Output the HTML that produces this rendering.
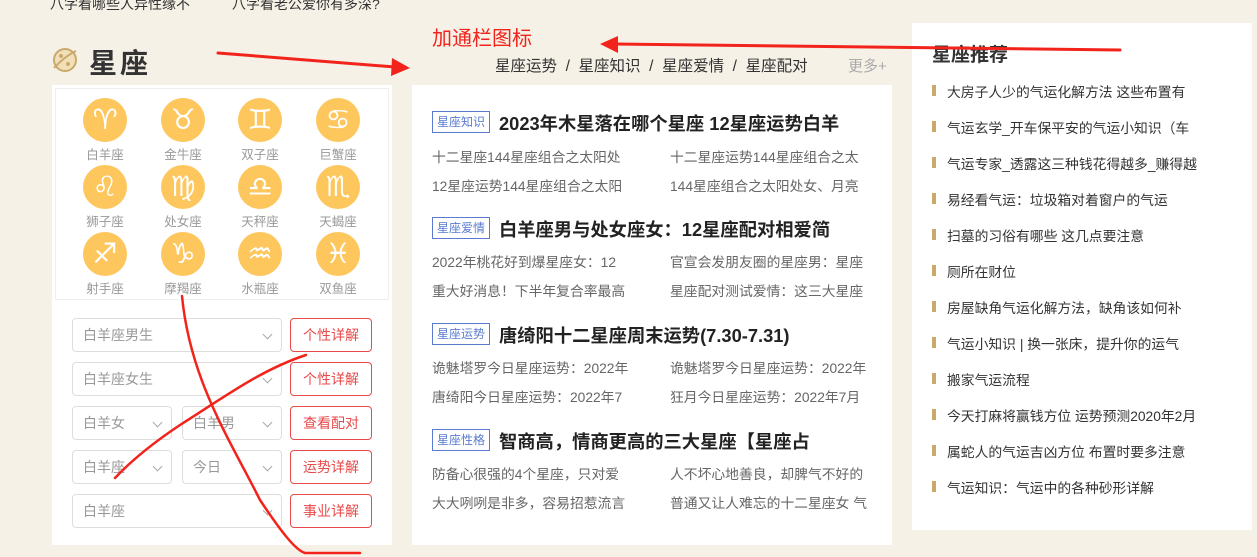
<!DOCTYPE html>
<html><head><meta charset="utf-8"><style>
*{margin:0;padding:0;box-sizing:border-box}
body{width:1257px;height:557px;overflow:hidden;background:#f6f1e7;font-family:"Liberation Sans","Noto Sans CJK SC",sans-serif;position:relative;color:#333}
.a{position:absolute;white-space:nowrap}
.panel{position:absolute;background:#fff}
.z{position:absolute;width:44px;height:44px;border-radius:50%;background:#fdc75e;color:#fff;font-family:"DejaVu Sans",sans-serif;font-size:28px;line-height:44px;text-align:center}
.zl{position:absolute;width:60px;text-align:center;font-size:12.5px;color:#999}
.sel{position:absolute;height:34px;border:1px solid #ddd;border-radius:4px;font-size:14px;color:#999;line-height:32px;padding-left:10px}
.sel:after{content:"";position:absolute;right:10px;top:12px;width:6px;height:6px;border-right:1px solid #aaa;border-bottom:1px solid #aaa;transform:rotate(45deg)}
.btn{position:absolute;left:290px;width:82px;height:34px;border:1px solid #e84a4a;border-radius:4px;color:#e84a4a;font-size:14px;line-height:32px;text-align:center}
.tag{position:absolute;left:432px;width:58px;height:22px;border:1px solid #5a7bd0;color:#5a7bd0;font-size:12px;line-height:20px;text-align:center}
.t{position:absolute;left:499px;font-size:18.3px;font-weight:bold;color:#222;white-space:nowrap}
.s{position:absolute;font-size:13.8px;color:#666;white-space:nowrap}
.r{position:absolute;left:932px;font-size:13.8px;color:#333;white-space:nowrap}
.r:before{content:"";position:absolute;left:0;top:4px;width:4px;height:11px;background:#c9a96c}
.r span{margin-left:15px}
</style></head><body>
<div class="a" style="left:50px;top:-6px;font-size:14px;color:#333">八字看哪些人异性缘不</div>
<div class="a" style="left:232px;top:-6px;font-size:14px;color:#333">八字看老公爱你有多深?</div>

<svg class="a" style="left:51px;top:46px" width="28" height="28" viewBox="0 0 28 28"><circle cx="14" cy="14" r="11" fill="#f1dfb8" stroke="#c9a96c" stroke-width="2"/><path d="M3 22 Q14 10 25 5" stroke="#c9a96c" stroke-width="2" fill="none"/><circle cx="10" cy="10" r="2" fill="#c9a96c"/><circle cx="17" cy="18" r="2" fill="#c9a96c"/></svg>
<div class="a" style="left:89px;top:42px;font-size:28px;font-weight:bold;color:#333;letter-spacing:3px">星座</div>

<div class="panel" style="left:52px;top:85px;width:340px;height:460px"></div>
<div class="a" style="left:55px;top:88px;width:334px;height:212px;border:1px solid #eee"></div>

<div class="z" style="left:83px;top:98px">♈&#xFE0E;</div><div class="zl" style="left:75px;top:144px">白羊座</div>
<div class="z" style="left:161px;top:98px">♉&#xFE0E;</div><div class="zl" style="left:153px;top:144px">金牛座</div>
<div class="z" style="left:238px;top:98px">♊&#xFE0E;</div><div class="zl" style="left:230px;top:144px">双子座</div>
<div class="z" style="left:316px;top:98px">♋&#xFE0E;</div><div class="zl" style="left:308px;top:144px">巨蟹座</div>
<div class="z" style="left:83px;top:165px">♌&#xFE0E;</div><div class="zl" style="left:75px;top:211px">狮子座</div>
<div class="z" style="left:161px;top:165px">♍&#xFE0E;</div><div class="zl" style="left:153px;top:211px">处女座</div>
<div class="z" style="left:238px;top:165px">♎&#xFE0E;</div><div class="zl" style="left:230px;top:211px">天秤座</div>
<div class="z" style="left:316px;top:165px">♏&#xFE0E;</div><div class="zl" style="left:308px;top:211px">天蝎座</div>
<div class="z" style="left:83px;top:232px">♐&#xFE0E;</div><div class="zl" style="left:75px;top:278px">射手座</div>
<div class="z" style="left:161px;top:232px">♑&#xFE0E;</div><div class="zl" style="left:153px;top:278px">摩羯座</div>
<div class="z" style="left:238px;top:232px">♒&#xFE0E;</div><div class="zl" style="left:230px;top:278px">水瓶座</div>
<div class="z" style="left:316px;top:232px">♓&#xFE0E;</div><div class="zl" style="left:308px;top:278px">双鱼座</div>

<div class="sel" style="left:72px;top:318px;width:210px">白羊座男生</div><div class="btn" style="top:318px">个性详解</div>
<div class="sel" style="left:72px;top:362px;width:210px">白羊座女生</div><div class="btn" style="top:362px">个性详解</div>
<div class="sel" style="left:72px;top:406px;width:100px">白羊女</div><div class="sel" style="left:182px;top:406px;width:100px">白羊男</div><div class="btn" style="top:406px">查看配对</div>
<div class="sel" style="left:72px;top:450px;width:100px">白羊座</div><div class="sel" style="left:182px;top:450px;width:100px">今日</div><div class="btn" style="top:450px">运势详解</div>
<div class="sel" style="left:72px;top:494px;width:210px">白羊座</div><div class="btn" style="top:494px">事业详解</div>

<div class="a" style="left:432px;top:22px;font-size:20px;color:#f2231b">加通栏图标</div>
<div class="a" style="left:495px;top:54px;font-size:15.5px;color:#333">星座运势 &nbsp;/ &nbsp;星座知识 &nbsp;/ &nbsp;星座爱情 &nbsp;/ &nbsp;星座配对</div>
<div class="a" style="left:848px;top:55px;font-size:15px;color:#aaa">更多+</div>

<div class="panel" style="left:412px;top:85px;width:480px;height:460px"></div>
<div class="tag" style="top:111px">星座知识</div><div class="t" style="top:110px">2023年木星落在哪个星座 12星座运势白羊</div>
<div class="s" style="left:432px;top:146px">十二星座144星座组合之太阳处</div><div class="s" style="left:670px;top:146px">十二星座运势144星座组合之太</div>
<div class="s" style="left:432px;top:175px">12星座运势144星座组合之太阳</div><div class="s" style="left:670px;top:175px">144星座组合之太阳处女、月亮</div>
<div class="tag" style="top:217px">星座爱情</div><div class="t" style="top:216px">白羊座男与处女座女：12星座配对相爱简</div>
<div class="s" style="left:432px;top:251px">2022年桃花好到爆星座女：12</div><div class="s" style="left:670px;top:251px">官宣会发朋友圈的星座男：星座</div>
<div class="s" style="left:432px;top:280px">重大好消息！下半年复合率最高</div><div class="s" style="left:670px;top:280px">星座配对测试爱情：这三大星座</div>
<div class="tag" style="top:323px">星座运势</div><div class="t" style="top:322px">唐绮阳十二星座周末运势(7.30-7.31)</div>
<div class="s" style="left:432px;top:357px">诡魅塔罗今日星座运势：2022年</div><div class="s" style="left:670px;top:357px">诡魅塔罗今日星座运势：2022年</div>
<div class="s" style="left:432px;top:386px">唐绮阳今日星座运势：2022年7</div><div class="s" style="left:670px;top:386px">狂月今日星座运势：2022年7月</div>
<div class="tag" style="top:429px">星座性格</div><div class="t" style="top:428px">智商高，情商更高的三大星座【星座占</div>
<div class="s" style="left:432px;top:463px">防备心很强的4个星座，只对爱</div><div class="s" style="left:670px;top:463px">人不坏心地善良，却脾气不好的</div>
<div class="s" style="left:432px;top:492px">大大咧咧是非多，容易招惹流言</div><div class="s" style="left:670px;top:492px">普通又让人难忘的十二星座女 气</div>

<div class="panel" style="left:912px;top:23px;width:340px;height:507px"></div>
<div class="a" style="left:932px;top:40px;font-size:19px;font-weight:bold;color:#333">星座推荐</div>
<div class="r" style="top:81px"><span>大房子人少的气运化解方法 这些布置有</span></div>
<div class="r" style="top:117px"><span>气运玄学_开车保平安的气运小知识（车</span></div>
<div class="r" style="top:153px"><span>气运专家_透露这三种钱花得越多_赚得越</span></div>
<div class="r" style="top:189px"><span>易经看气运：垃圾箱对着窗户的气运</span></div>
<div class="r" style="top:225px"><span>扫墓的习俗有哪些 这几点要注意</span></div>
<div class="r" style="top:261px"><span>厕所在财位</span></div>
<div class="r" style="top:297px"><span>房屋缺角气运化解方法，缺角该如何补</span></div>
<div class="r" style="top:333px"><span>气运小知识 | 换一张床，提升你的运气</span></div>
<div class="r" style="top:369px"><span>搬家气运流程</span></div>
<div class="r" style="top:405px"><span>今天打麻将赢钱方位 运势预测2020年2月</span></div>
<div class="r" style="top:441px"><span>属蛇人的气运吉凶方位 布置时要多注意</span></div>
<div class="r" style="top:477px"><span>气运知识：气运中的各种砂形详解</span></div>

<svg class="a" style="left:0;top:0" width="1257" height="557">
<g fill="none" stroke="#f2231b" stroke-linecap="round">
<path d="M218 53 L395 67" stroke-width="3"/>
<path d="M1120 50 L615 44" stroke-width="3"/>
<path d="M182 296 C190 380 230 440 260 500 C280 530 295 550 305 553 L360 553" stroke-width="2.5"/>
<path d="M306 355 C260 370 220 400 180 425 C150 445 130 462 115 478" stroke-width="2.5"/>
</g>
<path d="M410 68 L392 58 L391 76 Z" fill="#f2231b"/>
<path d="M600 44 L618 36 L618 53 Z" fill="#f2231b"/>
</svg>
</body></html>
